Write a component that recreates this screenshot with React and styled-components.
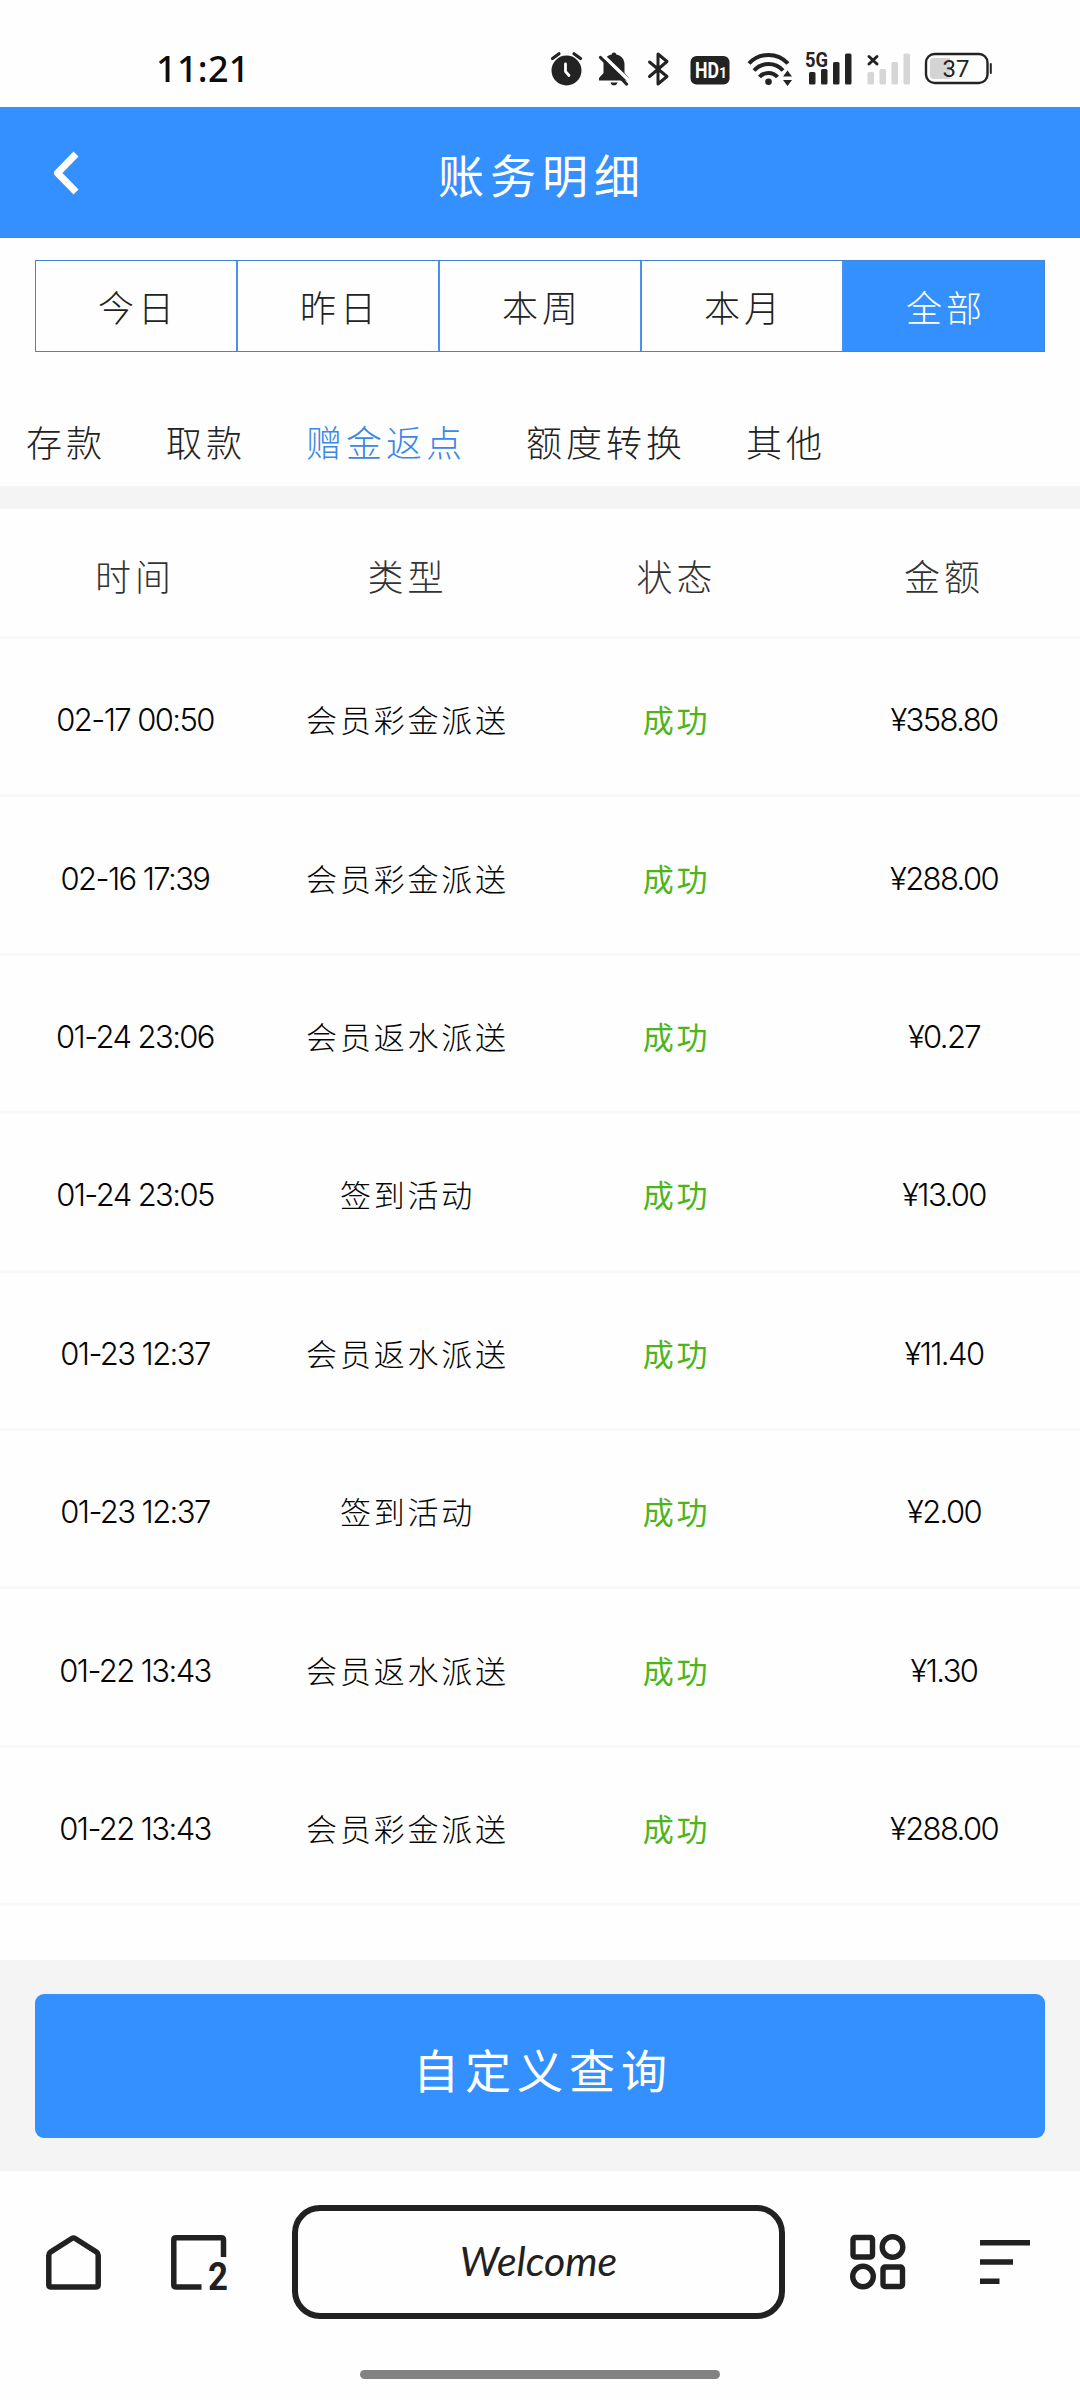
import React from "react";
import { useState } from "react";
import styled, { createGlobalStyle } from "styled-components";

const GlobalStyle = createGlobalStyle`
  * {
    box-sizing: border-box;
  }
  body {
    margin: 0;
    background-color: #fefefe;
    font-family: "Noto Sans CJK SC", sans-serif;
    font-weight: 300;
  }
  button {
    font: inherit;
    letter-spacing: inherit;
    background: none;
    border: none;
    padding: 0;
  }
`;

const Page = styled.div`
  width: 1080px;
  height: 2400px;
  display: flex;
  flex-direction: column;
  overflow: hidden;
  background-color: #fefefe;
`;

/* status bar */
const StatusBar = styled.div`
  height: 107px;
  flex: none;
  display: flex;
  justify-content: space-between;
  align-items: center;
  padding: 31px 88px 0 156px;
`;
const Clock = styled.span`
  font-family: "Noto Sans", "Open Sans", sans-serif;
  font-size: 36px;
  font-weight: 500;
  line-height: 40px;
  letter-spacing: 0.3px;
  color: #0c0c0c;
`;
const StatusIcons = styled.div`
  display: flex;
  align-items: center;
`;
const StatusIcon = styled.svg`
  display: block;
  height: 34px;
  width: ${({ w }) => w}px;
  margin-left: ${({ gap }) => gap || 0}px;
  overflow: visible;
`;

/* header */
const Header = styled.header`
  height: 131px;
  flex: none;
  display: grid;
  grid-template-columns: 130px 1fr 130px;
  align-items: center;
  background-color: #3490ff;
  color: white;
`;
const BackBtn = styled.button`
  height: 46px;
  padding-left: 52px;
  svg {
    display: block;
  }
`;
const Title = styled.h1`
  margin: 0;
  text-align: center;
  font-size: 46px;
  font-weight: 400;
  line-height: 60px;
  letter-spacing: 6px;
  text-indent: 4px;
`;

/* filters */
const RangeTabs = styled.div`
  display: flex;
  flex: none;
  height: 92px;
  margin: 22px 35px 0;
  border: 1px solid #4384d6;
`;
const RangeTab = styled.button`
  flex: 1;
  font-size: 36px;
  letter-spacing: 4px;
  text-indent: 4px;
  color: ${({ active }) => (active ? "white" : "#222")};
  background-color: ${({ active }) => (active ? "#3490ff" : "transparent")};
  & + & {
    border-left: 2px solid #4a90f0;
  }
`;
const TypeTabs = styled.div`
  display: flex;
  align-items: center;
  gap: 60px;
  flex: none;
  height: 134px;
  padding: 43px 0 0 26px;
`;
const TypeTab = styled.button`
  font-size: 36px;
  line-height: 48px;
  letter-spacing: 4px;
  color: ${({ active }) => (active ? "#3b87e8" : "#222")};
`;
const Divider = styled.div`
  height: 23px;
  flex: none;
  background-color: #f4f4f4;
`;

/* table */
const List = styled.div`
  flex: 1;
  min-height: 0;
`;
const Row = styled.div`
  display: grid;
  grid-template-columns: 270px 275px 263px 272px;
  align-items: center;
  text-align: center;
  height: 158.4px;
  padding-top: 4px;
  border-bottom: 3px solid #f8f8f8;
  font-size: 31px;
  color: #050505;
`;
const HeadRow = styled(Row)`
  height: 130px;
  font-size: 36px;
  letter-spacing: 4px;
  color: #333;
`;
const Digits = styled.span`
  font-family: Inter, sans-serif;
  font-size: 31px;
  letter-spacing: -1.6px;
  padding-top: 2px;
`;
const Kind = styled.span`
  letter-spacing: 2.8px;
`;
const Status = styled(Kind)`
  color: #4db51a;
  font-weight: 400;
`;

/* bottom query button */
const Footer = styled.div`
  height: 211px;
  flex: none;
  padding: 34px 35px;
  background-color: #f4f4f4;
`;
const QueryBtn = styled.button`
  display: block;
  width: 100%;
  height: 144px;
  border-radius: 9px;
  background-color: #3490ff;
  color: white;
  font-size: 46px;
  font-weight: 400;
  letter-spacing: 6px;
  text-indent: 6px;
  padding-top: 3px;
`;

/* browser bar */
const NavBar = styled.nav`
  height: 229px;
  flex: none;
  display: flex;
  flex-direction: column;
  align-items: center;
  padding-top: 34px;
`;
const NavItems = styled.div`
  width: 100%;
  display: flex;
  align-items: center;
  padding-left: 46px;
`;
const NavIcon = styled.svg`
  display: block;
  flex: none;
  overflow: visible;
  margin-left: ${({ gap }) => gap || 0}px;
`;
const Address = styled.div`
  width: 493px;
  height: 114px;
  flex: none;
  margin-left: 65px;
  border: 6px solid #212121;
  border-radius: 28px;
  display: flex;
  align-items: center;
  justify-content: center;
  font-family: Lato, sans-serif;
  font-style: italic;
  font-weight: 400;
  font-size: 41px;
  line-height: 50px;
  padding-bottom: 3px;
  color: #212121;
`;
const TabCount = styled.text`
  font-family: Roboto, sans-serif;
  font-weight: 700;
  font-size: 38px;
`;
const GestureBar = styled.div`
  width: 360px;
  height: 9px;
  margin-top: 51px;
  border-radius: 5px;
  background-color: #828282;
`;

const INK = "#232323";

const SignalBars = ({ x, color }) => (
  <g fill={color}>
    <rect x={x} y="20" width="6.5" height="12.5" rx="1.5" />
    <rect x={x + 12} y="17" width="6.5" height="15.5" rx="1.5" />
    <rect x={x + 24} y="10" width="6.5" height="22.5" rx="1.5" />
    <rect x={x + 36} y="1.5" width="6.5" height="31" rx="1.5" />
  </g>
);

const StatusBarIcons = () => (
  <StatusIcons>
    <StatusIcon w={31} viewBox="0 0 31 34">
      <circle cx="15.5" cy="18.5" r="15" fill={INK} />
      <path
        d="M1.5 6.5 L8 1.8 M29.5 6.5 L23 1.8"
        stroke={INK}
        strokeWidth="3.2"
        strokeLinecap="round"
      />
      <path
        d="M14.5 12 V19.5 L18 23.5"
        stroke="#fefefe"
        strokeWidth="2.8"
        fill="none"
        strokeLinecap="round"
      />
    </StatusIcon>
    <StatusIcon w={30} gap={17} viewBox="0 0 30 34">
      <path
        d="M15 0.5 C16.6 0.5 17.3 1.5 17.3 2.6 C22.5 3.6 25.5 7.5 25.5 12.5 V21 L30 26 V28.5 H0 V26 L4.5 21 V12.5 C4.5 7.5 7.5 3.6 12.7 2.6 C12.7 1.5 13.4 0.5 15 0.5 Z M11.5 30.5 H18.5 C18 32.5 16.8 33.3 15 33.3 C13.2 33.3 12 32.5 11.5 30.5 Z"
        fill={INK}
      />
      <path d="M2 1.5 L31 29.5" stroke="#fefefe" strokeWidth="3.4" />
      <path
        d="M1.5 5.5 L27.5 32"
        stroke={INK}
        strokeWidth="3.2"
        strokeLinecap="round"
      />
    </StatusIcon>
    <StatusIcon w={21} gap={19} viewBox="0 0 21 34">
      <path
        d="M1.5 10 L19 24.5 L10 32 V2 L19 9.5 L1.5 24.5"
        stroke={INK}
        strokeWidth="3"
        fill="none"
        strokeLinejoin="round"
        strokeLinecap="round"
      />
    </StatusIcon>
    <StatusIcon w={40} gap={21} viewBox="0 0 40 34">
      <rect x="0.5" y="4" width="39" height="28.5" rx="6" fill={INK} />
      <text
        x="5"
        y="26"
        fill="#fefefe"
        fontFamily="Roboto, sans-serif"
        fontWeight="700"
        fontSize="22"
        textLength="24"
        lengthAdjust="spacingAndGlyphs"
      >
        HD
      </text>
      <text
        x="29"
        y="26"
        fill="#fefefe"
        fontFamily="Roboto, sans-serif"
        fontWeight="700"
        fontSize="14"
      >
        1
      </text>
    </StatusIcon>
    <StatusIcon w={45} gap={17} viewBox="0 0 45 34">
      <g stroke={INK} strokeWidth="4" fill="none">
        <path d="M2 11.5 A26.5 26.5 0 0 1 41 11.5" />
        <path d="M7 18.5 A19.5 19.5 0 0 1 36 18.5" />
        <path d="M12.5 25 A12 12 0 0 1 30.5 25" />
      </g>
      <circle cx="21.5" cy="29.8" r="3.3" fill={INK} />
      <path
        d="M36 24.5 L40.5 18.5 L45 24.5 Z M36 28 L40.5 34 L45 28 Z"
        fill={INK}
      />
    </StatusIcon>
    <StatusIcon w={46} gap={14} viewBox="0 0 46 34">
      <SignalBars x={3} color={INK} />
      <text
        x="-1"
        y="15"
        fill={INK}
        stroke="#fefefe"
        strokeWidth="2"
        paintOrder="stroke"
        fontFamily="Roboto, sans-serif"
        fontWeight="700"
        fontSize="20"
        textLength="23"
        lengthAdjust="spacingAndGlyphs"
      >
        5G
      </text>
    </StatusIcon>
    <StatusIcon w={44} gap={15} viewBox="0 0 44 34">
      <SignalBars x={0.5} color="#d6d6d6" />
      <path
        d="M2 4.5 L10 12 M10 4.5 L2 12"
        stroke={INK}
        strokeWidth="3"
        strokeLinecap="round"
      />
    </StatusIcon>
    <StatusIcon w={67} gap={14} viewBox="0 0 67 34">
      <rect
        x="1"
        y="2"
        width="61.5"
        height="29"
        rx="8.5"
        stroke={INK}
        strokeWidth="2.4"
        fill="none"
      />
      <path d="M9 6 H25 V27 H9 Q5 27 5 23 V10 Q5 6 9 6 Z" fill="#d4d4d4" />
      <path d="M65.8 12 V21" stroke={INK} strokeWidth="2" strokeLinecap="round" />
      <text
        x="17.5"
        y="25"
        fill={INK}
        fontFamily="Roboto, sans-serif"
        fontWeight="400"
        fontSize="24"
      >
        37
      </text>
    </StatusIcon>
  </StatusIcons>
);

const HomeIcon = () => (
  <NavIcon width="55" height="55" viewBox="0 0 55 55" fill="none">
    <path
      d="M2.8 20.5 Q2.8 18.3 4.6 17 L25.8 3.5 Q27.5 2.5 29.2 3.5 L50.4 17 Q52.2 18.3 52.2 20.5 V49.7 Q52.2 52 50 52 H5 Q2.8 52 2.8 49.7 Z"
      stroke="#212121"
      strokeWidth="5.5"
    />
  </NavIcon>
);

const TabsIcon = () => (
  <NavIcon gap={70} width="56" height="55" viewBox="0 0 56 55" fill="none">
    <path
      d="M52.5 22 V5 Q52.5 2.8 50.3 2.8 H5 Q2.8 2.8 2.8 5 V49.8 Q2.8 52 5 52 H30.5"
      stroke="#212121"
      strokeWidth="5.5"
    />
    <TabCount
      x="37"
      y="54.5"
      fill="#212121"
      textLength="20"
      lengthAdjust="spacingAndGlyphs"
    >
      2
    </TabCount>
  </NavIcon>
);

const AppsIcon = () => (
  <NavIcon gap={65} width="56" height="56" viewBox="0 0 56 56" fill="none">
    <g stroke="#212121" strokeWidth="5.4">
      <rect x="3" y="3.5" width="19.5" height="19.5" rx="2" />
      <circle cx="42.5" cy="13" r="10.3" />
      <circle cx="13" cy="42.5" r="10.3" />
      <rect x="33" y="33" width="19.5" height="19.5" rx="2" />
    </g>
  </NavIcon>
);

const MenuIcon = () => (
  <NavIcon gap={74} width="50" height="46" viewBox="0 0 50 46" fill="none">
    <path
      d="M0 3.8 H50 M0 23 H33 M0 42.2 H19.5"
      stroke="#212121"
      strokeWidth="5.6"
    />
  </NavIcon>
);

const ranges = ["今日", "昨日", "本周", "本月", "全部"];
const types = ["存款", "取款", "赠金返点", "额度转换", "其他"];
const columns = ["时间", "类型", "状态", "金额"];
const records = [
  { time: "02-17 00:50", kind: "会员彩金派送", amount: "¥358.80" },
  { time: "02-16 17:39", kind: "会员彩金派送", amount: "¥288.00" },
  { time: "01-24 23:06", kind: "会员返水派送", amount: "¥0.27" },
  { time: "01-24 23:05", kind: "签到活动", amount: "¥13.00" },
  { time: "01-23 12:37", kind: "会员返水派送", amount: "¥11.40" },
  { time: "01-23 12:37", kind: "签到活动", amount: "¥2.00" },
  { time: "01-22 13:43", kind: "会员返水派送", amount: "¥1.30" },
  { time: "01-22 13:43", kind: "会员彩金派送", amount: "¥288.00" },
];

const App = () => {
  const [range, setRange] = useState("全部");
  const [type, setType] = useState("赠金返点");

  return (
    <Page>
      <GlobalStyle />
      <StatusBar>
        <Clock>11:21</Clock>
        <StatusBarIcons />
      </StatusBar>
      <Header>
        <BackBtn>
          <svg width="28" height="46" viewBox="0 0 28 46" fill="none">
            <path
              d="M24 4 L5.5 23 L24 42"
              stroke="white"
              strokeWidth="7"
              strokeLinejoin="round"
            />
          </svg>
        </BackBtn>
        <Title>账务明细</Title>
      </Header>
      <RangeTabs>
        {ranges.map((r) => (
          <RangeTab key={r} active={r === range ? 1 : 0} onClick={() => setRange(r)}>
            {r}
          </RangeTab>
        ))}
      </RangeTabs>
      <TypeTabs>
        {types.map((t) => (
          <TypeTab key={t} active={t === type ? 1 : 0} onClick={() => setType(t)}>
            {t}
          </TypeTab>
        ))}
      </TypeTabs>
      <Divider />
      <List>
        <HeadRow>
          {columns.map((c) => (
            <span key={c}>{c}</span>
          ))}
        </HeadRow>
        {records.map((item, i) => (
          <Row key={i}>
            <Digits>{item.time}</Digits>
            <Kind>{item.kind}</Kind>
            <Status>成功</Status>
            <Digits>{item.amount}</Digits>
          </Row>
        ))}
      </List>
      <Footer>
        <QueryBtn>自定义查询</QueryBtn>
      </Footer>
      <NavBar>
        <NavItems>
          <HomeIcon />
          <TabsIcon />
          <Address>Welcome</Address>
          <AppsIcon />
          <MenuIcon />
        </NavItems>
        <GestureBar />
      </NavBar>
    </Page>
  );
};

export default App;
